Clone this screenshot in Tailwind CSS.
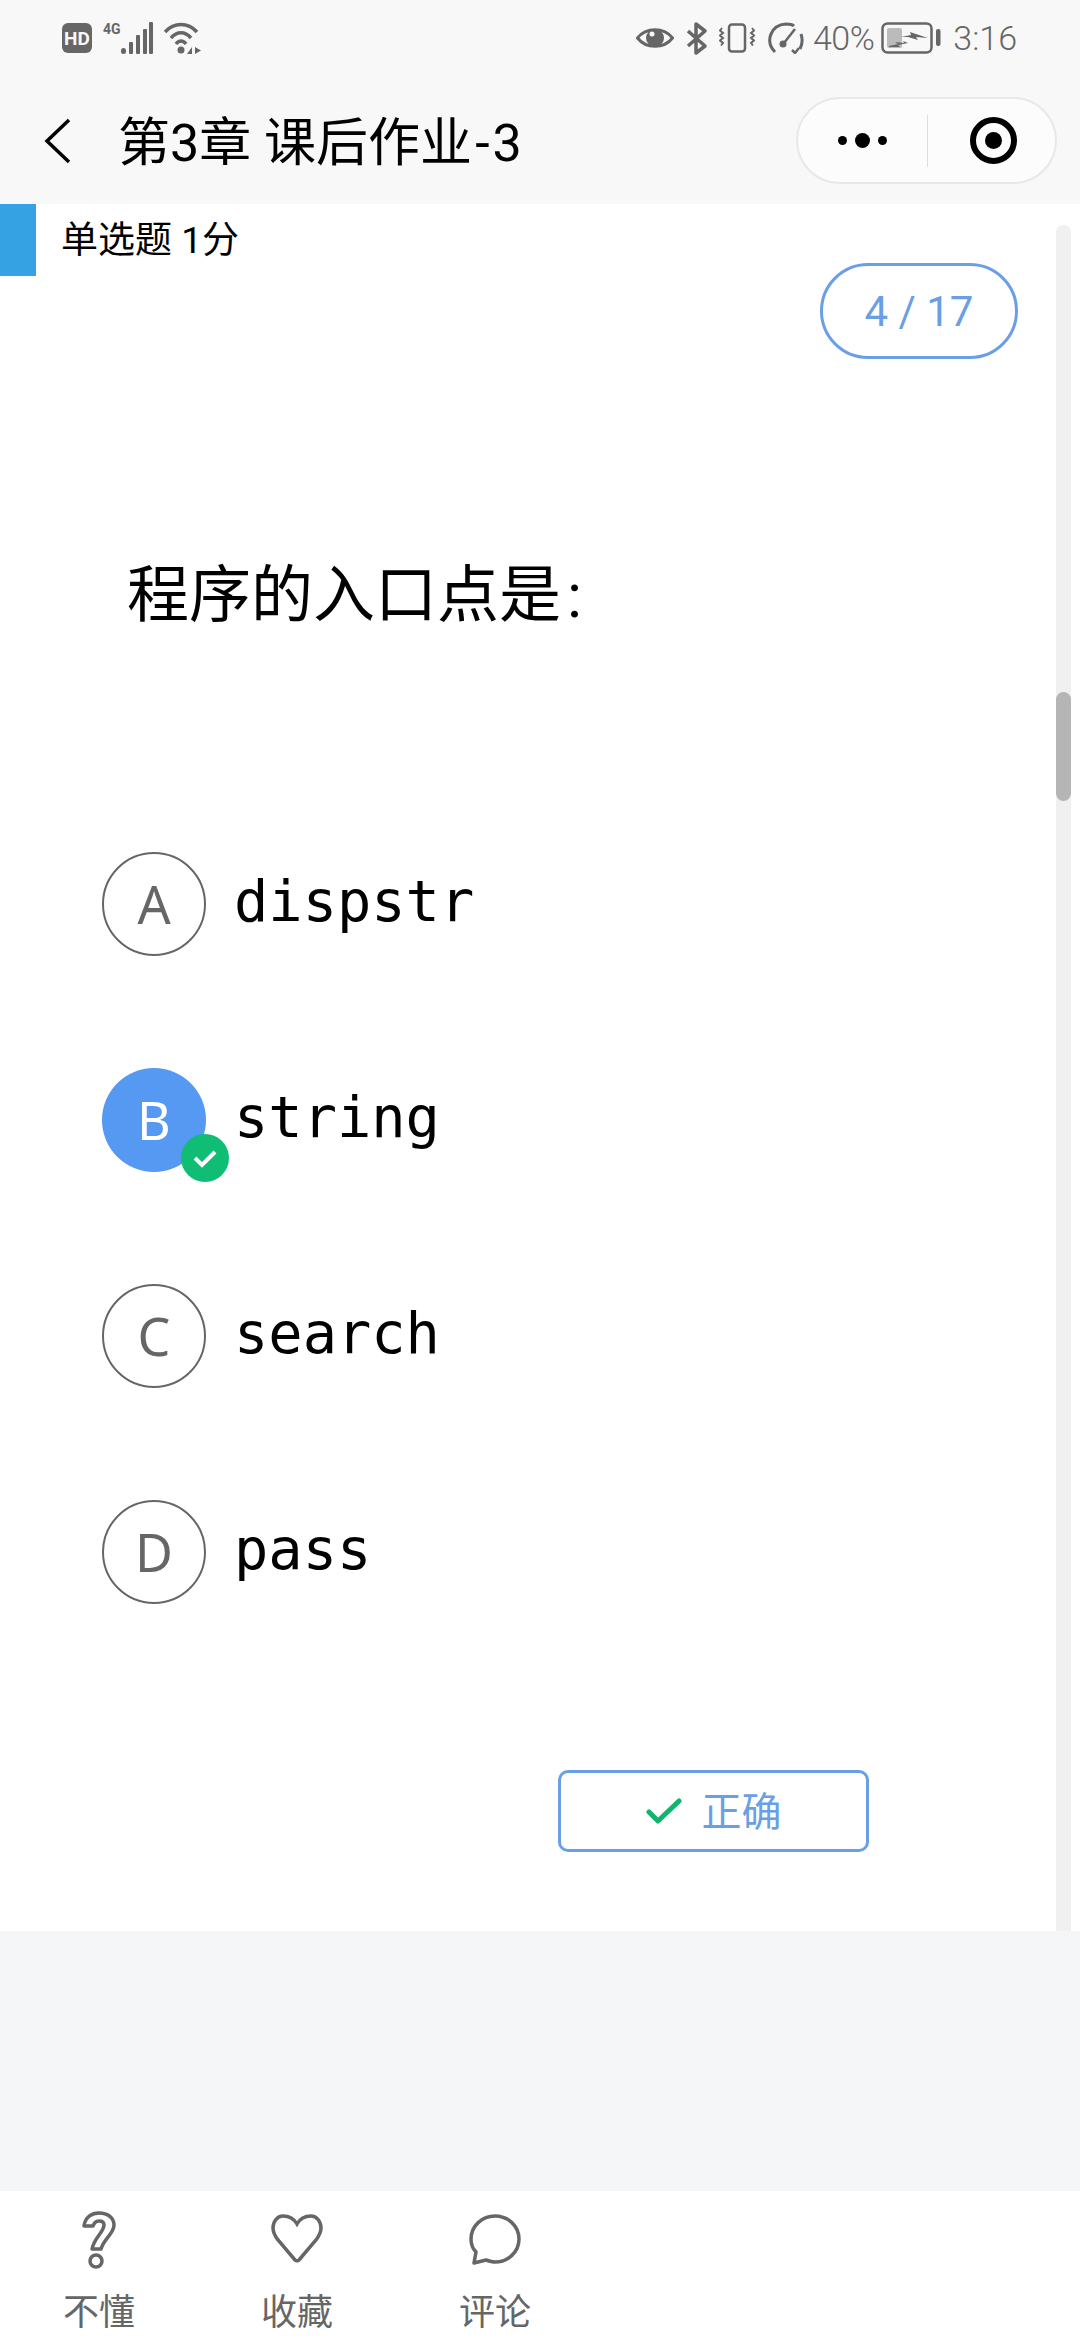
<!DOCTYPE html>
<html lang="zh">
<head>
<meta charset="UTF-8">
<title>第3章 课后作业-3</title>
<script src="https://cdn.jsdelivr.net/npm/@tailwindcss/browser@4"></script>
</head>
<body class="w-[1080px] h-[2340px] overflow-hidden bg-white font-['Roboto','Noto_Sans_CJK_SC',sans-serif]">

<!-- top bars -->
<header class="h-[204px] bg-[#f8f8f8]">
  <div class="h-[76px] pl-[62px] pr-[63px] flex items-center justify-between text-[#666]">
    <div class="flex items-center">
      <svg class="w-[30px] h-[30px]" viewBox="0 0 30 30"><rect width="30" height="30" rx="6" fill="#666"/><text x="15" y="22" text-anchor="middle" font-size="19" font-weight="700" fill="#f8f8f8" font-family="Roboto">HD</text></svg>
      <svg class="ml-[11px] w-[50px] h-[32px]" viewBox="0 0 50 32" fill="#666"><text x="0" y="12" font-size="14" font-weight="700" font-family="Roboto">4G</text><rect x="18" y="26" width="5" height="6" rx="2.5"/><rect x="26" y="20" width="4" height="12" rx="1"/><rect x="33" y="13" width="4" height="19" rx="1"/><rect x="40" y="7" width="4" height="25" rx="1"/><rect x="46" y="0" width="4" height="32" rx="1"/></svg>
      <svg class="ml-[11px] w-[38px] h-[32px]" viewBox="0 0 38 32" fill="none" stroke="#666" stroke-width="3.5"><path d="M1 10C10 0 24 0 33 10"/><path d="M7 16C13 9 21 9 27 16"/><path d="M12 22C15 18 19 18 22 22"/><circle cx="17" cy="28" r="3.5" fill="#666" stroke="none"/><path d="M23 32l5-7v7zM31 25l6 3.5-6 3.5z" fill="#666" stroke="none"/></svg>
    </div>
    <div class="flex items-center">
      <svg class="w-[38px] h-[26px]" viewBox="0 0 38 26"><path d="M1.5 13C10 2 28 2 36.5 13C28 24 10 24 1.5 13Z" fill="none" stroke="#666" stroke-width="3"/><circle cx="19" cy="13" r="9" fill="#666"/><circle cx="16" cy="9" r="2.5" fill="#f8f8f8"/></svg>
      <svg class="ml-[12px] w-[21px] h-[33px]" viewBox="0 0 21 33" fill="none" stroke="#666" stroke-width="3.5" stroke-linejoin="round"><path d="M2 9L19 24L10 31V2L19 9L2 24"/></svg>
      <svg class="ml-[12px] w-[36px] h-[30px]" viewBox="0 0 36 30" fill="none" stroke="#666" stroke-width="2.5"><rect x="10" y="1.5" width="16" height="27" rx="3"/><path d="M3 5l-2 2.5 3 2.5-3 2.5 3 2.5-3 2.5 3 2.5-2 2.5M33 5l2 2.5-3 2.5 3 2.5-3 2.5 3 2.5-3 2.5 2 2.5" stroke-width="2"/></svg>
      <svg class="ml-[12px] w-[37px] h-[32px]" viewBox="0 0 37 32" fill="none" stroke="#666" stroke-width="3"><path d="M8 30C-2 20 3 3 19 2C23 2 25 2 27 4"/><path d="M34 12C36 18 35 23 33 27"/><path d="M17 21L28 7" stroke-width="2.5"/><circle cx="16" cy="22" r="3.5" fill="#666" stroke="none"/><path d="M25 28l3 3 4-5" stroke-width="2.5"/></svg>
      <span class="ml-[9px] text-[34px] leading-none tracking-[-0.5px] font-light">40%</span>
      <svg class="ml-[7px] w-[60px] h-[32px]" viewBox="0 0 60 32"><rect x="1.5" y="1.5" width="49" height="29" rx="5" fill="none" stroke="#666" stroke-width="2.5"/><rect x="6" y="6" width="15" height="20" rx="2" fill="#bbb"/><path d="M8 24l9-2-3-2 9 1-1-2 5 2-10 2 2 2-11 0zM20 15l10-2-1-3 18 6-12-1 2 3-10-3z" fill="#666"/><rect x="55" y="7" width="4.5" height="17" rx="2" fill="#666"/></svg>
      <span class="ml-[12px] text-[34px] leading-none font-light">3:16</span>
    </div>
  </div>
  <div class="relative h-[128px] flex items-start">
    <svg class="absolute left-[44px] top-[42px] w-[28px] h-[46px]" viewBox="0 0 28 46" fill="none" stroke="#000" stroke-width="3.5"><path d="M25 2L3 23L25 44"/></svg>
    <h1 class="ml-[118px] mt-[30px] text-[52px] leading-[76px] font-normal text-black whitespace-nowrap">第3章 课后作业<span class="px-[3px]">-</span>3</h1>
    <div class="absolute left-[796px] top-[21px] w-[261px] h-[87px] rounded-full border-2 border-[#e8e8e8] bg-white/60 flex items-center">
      <div class="w-[129px] flex items-center justify-center gap-[8px]">
        <span class="w-[9px] h-[9px] rounded-full bg-black"></span>
        <span class="w-[15px] h-[15px] rounded-full bg-black"></span>
        <span class="w-[9px] h-[9px] rounded-full bg-black"></span>
      </div>
      <div class="w-px h-[52px] bg-[#ddd]"></div>
      <div class="flex-1 flex justify-center pl-[3px]">
        <div class="w-[47px] h-[47px] rounded-full border-[6px] border-black flex items-center justify-center">
          <span class="w-[17px] h-[17px] rounded-full bg-black"></span>
        </div>
      </div>
    </div>
  </div>
</header>

<!-- question -->
<main class="relative h-[1727px] bg-white">
  <div class="absolute left-0 top-0 w-[36px] h-[72px] bg-[#35a3e3]"></div>
  <div class="absolute left-[1056px] top-[21px] bottom-0 w-[15px] rounded-t-full bg-[#f0f0f0]">
    <div class="absolute top-[467px] h-[109px] w-full rounded-full bg-[#b5b5b5]"></div>
  </div>

  <p class="pl-[61px] pt-[13px] text-[37px] leading-[48px] text-black">单选题 1分</p>
  <div class="flex justify-end pr-[62px] mt-[-2px]">
    <div class="w-[198px] h-[96px] rounded-full border-[3px] border-[#6a9fe6] flex items-center justify-center text-[42px] text-[#6a9fe6]">4 / 17</div>
  </div>

  <h2 class="pl-[127px] mt-[197px] text-[62px] leading-[80px] font-normal text-black">程序的入口点是<span class="ml-[6px]">:</span></h2>

  <ul class="pl-[102px] mt-[216px] flex flex-col gap-[112px] font-['DejaVu_Sans_Mono',monospace] text-[57px] text-black">
    <li class="flex items-center h-[104px]">
      <span class="w-[104px] h-[104px] rounded-full border-2 border-[#666] flex items-center justify-center font-['Noto_Sans',sans-serif] text-[52px] text-[#666]">A</span>
      <span class="ml-[28px] leading-none -mt-[6px]">dispstr</span>
    </li>
    <li class="flex items-center h-[104px]">
      <span class="relative w-[104px] h-[104px] rounded-full bg-[#5599f2] flex items-center justify-center font-['Noto_Sans',sans-serif] text-[52px] text-white">
        B
        <span class="absolute left-[79px] top-[66px] w-[48px] h-[48px] rounded-full bg-[#0fbd75] flex items-center justify-center">
          <svg class="w-[28px] h-[28px]" viewBox="0 0 28 28" fill="none" stroke="#fff" stroke-width="4"><path d="M4 14L11 21L24 8"/></svg>
        </span>
      </span>
      <span class="ml-[28px] leading-none -mt-[6px]">string</span>
    </li>
    <li class="flex items-center h-[104px]">
      <span class="w-[104px] h-[104px] rounded-full border-2 border-[#666] flex items-center justify-center font-['Noto_Sans',sans-serif] text-[52px] text-[#666]">C</span>
      <span class="ml-[28px] leading-none -mt-[6px]">search</span>
    </li>
    <li class="flex items-center h-[104px]">
      <span class="w-[104px] h-[104px] rounded-full border-2 border-[#666] flex items-center justify-center font-['Noto_Sans',sans-serif] text-[52px] text-[#666]">D</span>
      <span class="ml-[28px] leading-none -mt-[6px]">pass</span>
    </li>
  </ul>

  <div class="absolute left-[558px] top-[1566px] w-[311px] h-[82px] rounded-[10px] border-[3px] border-[#6a9fe6] flex items-center justify-center gap-[20px]">
    <svg class="w-[36px] h-[28px]" viewBox="0 0 36 28" fill="none" stroke="#0fb56f" stroke-width="5" stroke-linecap="round" stroke-linejoin="round"><path d="M3 15L12 24L33 4"/></svg>
    <span class="text-[40px] leading-none text-[#6a9fe6] mt-[4px]">正确</span>
  </div>
</main>

<div class="h-[260px] bg-[#f5f6f8]"></div>

<!-- bottom actions -->
<nav class="h-[149px] bg-white flex pl-[63px] gap-[126px] text-[#666] text-[36px]">
  <div class="w-[72px] flex flex-col items-center pt-[20px]">
    <svg class="w-[34px] h-[58px]" viewBox="0 0 34 58" fill="none" stroke="#666" stroke-width="3.5" stroke-linejoin="round"><path d="M2 15C3 6 10 2 17 2C26 2 32 7 32 14C32 23 22 27 19 38H10C12 27 22 21 22 14C22 11 20 10 17 10C14 10 12 12 11 15Z"/><circle cx="14" cy="50" r="6"/></svg>
    <span class="mt-[21px] leading-[46px] whitespace-nowrap">不懂</span>
  </div>
  <div class="w-[72px] flex flex-col items-center pt-[20px]">
    <svg class="w-[52px] h-[58px]" viewBox="0 0 52 58" fill="none" stroke="#666" stroke-width="3.5"><path d="M26 13C22 6 16 5 12 5C6 5 2 11 2 17C2 22 4 25 7 29L24 49C25 50 27 50 28 49L45 29C48 25 50 22 50 17C50 11 46 5 40 5C36 5 30 6 26 13Z"/></svg>
    <span class="mt-[21px] leading-[46px] whitespace-nowrap">收藏</span>
  </div>
  <div class="w-[72px] flex flex-col items-center pt-[20px]">
    <svg class="w-[52px] h-[58px]" viewBox="0 0 52 58" fill="none" stroke="#666" stroke-width="3.5" stroke-linejoin="round"><path d="M26 5C13 5 2 15 2 28C2 33 4 38 7 41L5 52L17 49C20 50 23 51 26 51C39 51 50 41 50 28C50 15 39 5 26 5Z"/></svg>
    <span class="mt-[21px] leading-[46px] whitespace-nowrap">评论</span>
  </div>
</nav>

</body>
</html>
